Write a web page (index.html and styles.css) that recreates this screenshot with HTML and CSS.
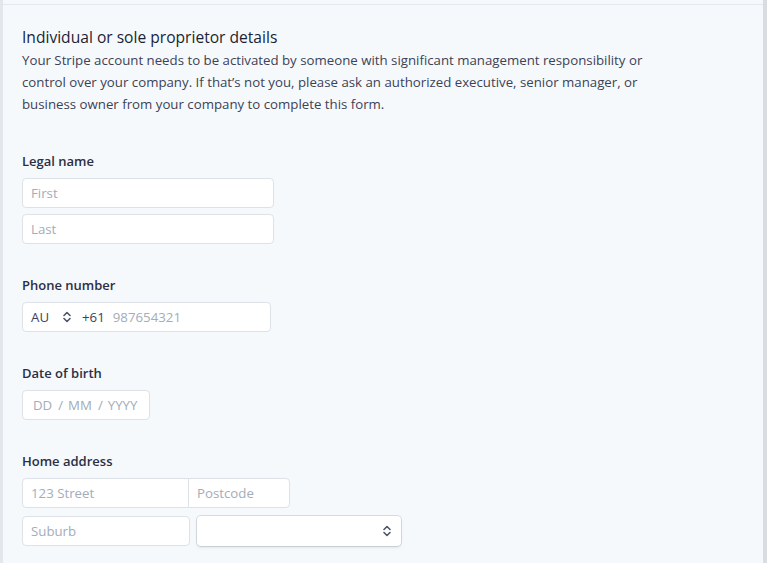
FILE: index.html
```html
<!DOCTYPE html>
<html>
<head>
<meta charset="utf-8">
<link rel="stylesheet" href="styles.css">
</head>
<body>
<div class="frame">
  <div class="panel">
    <h1 class="title">Individual or sole proprietor details</h1>
    <p class="intro">Your Stripe account needs to be activated by someone with significant management responsibility or control over your company. If that’s not you, please ask an authorized executive, senior manager, or business owner from your company to complete this form.</p>

    <section class="field">
      <div class="label">Legal name</div>
      <div class="stack">
        <div class="input w252"><span class="ph">First</span></div>
        <div class="input w252"><span class="ph">Last</span></div>
      </div>
    </section>

    <section class="field">
      <div class="label">Phone number</div>
      <div class="input w249 phone">
        <span class="val country">AU</span>
        <svg class="chev" width="8" height="12" viewBox="0 0 8 12"><path d="M1 4.5 L4 1.5 L7 4.5 M1 7.5 L4 10.5 L7 7.5" fill="none" stroke="#4f566b" stroke-width="1.6" stroke-linecap="round" stroke-linejoin="round"/></svg>
        <span class="val code">+61</span>
        <span class="ph">987654321</span>
      </div>
    </section>

    <section class="field">
      <div class="label">Date of birth</div>
      <div class="input w128 dob">
        <span class="ph">DD</span><span class="ph sep">/</span><span class="ph">MM</span><span class="ph sep">/</span><span class="ph">YYYY</span>
      </div>
    </section>

    <section class="field">
      <div class="label">Home address</div>
      <div class="stack addr">
        <div class="split">
          <div class="part street"><span class="ph">123 Street</span></div>
          <div class="part post"><span class="ph">Postcode</span></div>
        </div>
        <div class="row">
          <div class="input w168"><span class="ph">Suburb</span></div>
          <div class="select">
            <svg class="chev" width="8" height="12" viewBox="0 0 8 12"><path d="M1 4.5 L4 1.5 L7 4.5 M1 7.5 L4 10.5 L7 7.5" fill="none" stroke="#4f566b" stroke-width="1.6" stroke-linecap="round" stroke-linejoin="round"/></svg>
          </div>
        </div>
      </div>
    </section>
  </div>
</div>
</body>
</html>
```

FILE: styles.css
```css
* { box-sizing: border-box; }
html, body { margin: 0; padding: 0; }
body {
  background: #f6f9fc;
  font-family: "Open Sans", "Noto Sans", sans-serif;
  color: #3c4257;
  overflow: hidden;
}
.frame {
  height: 563px;
  border-left: 3px solid #e3e7ec;
  border-right: 4px solid #d9dde2;
  padding-top: 4px;
}
.panel {
  border-top: 1px solid #e3e8ee;
  padding: 20px 19px 0 19px;
}
.title {
  margin: 0;
  font-size: 15.6px;
  line-height: 24px;
  font-weight: 500;
  color: #1a1f36;
}
.intro {
  margin: 0;
  font-size: 13.25px;
  line-height: 22px;
  color: #3c4257;
  max-width: 650px;
}
.field { margin-top: 31px; }
.intro + .field { margin-top: 36px; }
.label {
  font-size: 13px;
  line-height: 20px;
  font-weight: 600;
  color: #2a2f45;
  margin-bottom: 7px;
}
.stack { display: flex; flex-direction: column; gap: 6px; }
.addr { gap: 8px; }
.input {
  height: 30px;
  background: #fff;
  border: 1px solid #dde2e8;
  border-radius: 4px;
  display: flex;
  align-items: center;
  padding: 0 8px;
  font-size: 13.25px;
}
.w252 { width: 252px; }
.w249 { width: 249px; }
.w128 { width: 128px; }
.w168 { width: 168px; }
.ph { color: #a3acb9; }
.val { color: #3c4257; }
.phone .country { margin-right: 14px; }
.phone .chev { margin-right: 11px; }
.phone .code { margin-right: 8px; }
.dob { padding-left: 10px; }
.dob .sep { margin: 0 5px 0 6px; }
.split {
  display: flex;
  width: 268px;
  height: 30px;
  background: #fff;
  border: 1px solid #dde2e8;
  border-radius: 4px;
  font-size: 13.25px;
}
.part { display: flex; align-items: center; padding: 0 8px; }
.street { width: 166px; border-right: 1px solid #dde2e8; }
.post { flex: 1; }
.row { display: flex; gap: 7px; }
.select {
  width: 204px;
  height: 30px;
  background: #fff;
  border-radius: 4px;
  box-shadow: 0 0 0 1px rgba(60,66,87,0.16), 0 2px 3px rgba(60,66,87,0.10);
  display: flex;
  align-items: center;
  justify-content: flex-end;
  padding-right: 10px;
}
```
